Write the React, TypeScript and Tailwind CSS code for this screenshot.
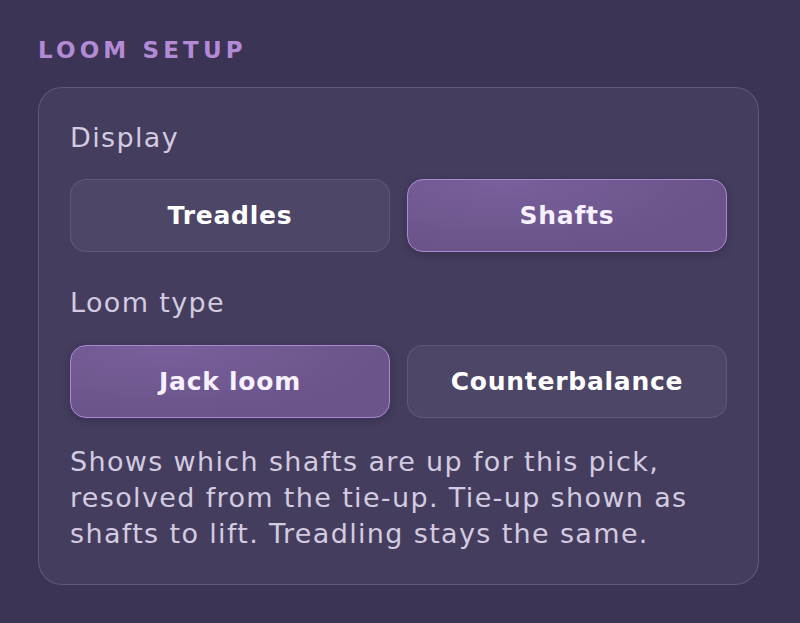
import { useState } from 'react';

const FONT = "font-['DejaVu_Sans',sans-serif]";

// One option in a two-up segmented choice.
function Choice({ label, active, onClick }: { label: string; active: boolean; onClick: () => void }) {
  return (
    <button
      onClick={onClick}
      className={`flex h-[73px] items-center justify-center rounded-[16px] border text-[25px] font-bold tracking-[0.03em] ${
        active
          ? 'border-[#a98ad2] bg-[radial-gradient(ellipse_at_30%_0%,#7a5f9c,#6a5489_70%)] text-[#f7f0ff] shadow-[0_2px_8px_rgba(20,10,40,0.25)]'
          : 'border-white/10 bg-[#4d4666] text-white'
      }`}
    >
      {label}
    </button>
  );
}

export default function App() {
  const [display, setDisplay] = useState('shafts');
  const [loom, setLoom] = useState('jack');

  return (
    <div className={`min-h-[623px] w-full bg-[#3c3455] pl-[38px] pr-[41px] pt-[36px] ${FONT}`}>
      <h2 className="text-[23px] font-bold uppercase leading-[28px] tracking-[0.18em] text-[#b48ad6]">
        Loom setup
      </h2>
      <section className="mt-[23px] rounded-[24px] border border-white/15 bg-[#443d5d] px-[31px] pt-[30px] pb-[32px]">
        <p className="text-[27px] leading-[40px] tracking-[0.05em] text-[#d3cbe0]">Display</p>
        <div className="mt-[21px] grid grid-cols-2 gap-[17px]">
          <Choice label="Treadles" active={display === 'treadles'} onClick={() => setDisplay('treadles')} />
          <Choice label="Shafts" active={display === 'shafts'} onClick={() => setDisplay('shafts')} />
        </div>
        <p className="mt-[31px] text-[27px] leading-[40px] tracking-[0.05em] text-[#d3cbe0]">Loom type</p>
        <div className="mt-[22px] grid grid-cols-2 gap-[17px]">
          <Choice label="Jack loom" active={loom === 'jack'} onClick={() => setLoom('jack')} />
          <Choice label="Counterbalance" active={loom === 'counter'} onClick={() => setLoom('counter')} />
        </div>
        <p className="mt-[26px] whitespace-nowrap text-[27px] leading-[36px] tracking-[0.05em] text-[#d3cbe0]">
          Shows which shafts are up for this pick,
          <br />
          resolved from the tie-up. Tie-up shown as
          <br />
          shafts to lift. Treadling stays the same.
        </p>
      </section>
    </div>
  );
}
